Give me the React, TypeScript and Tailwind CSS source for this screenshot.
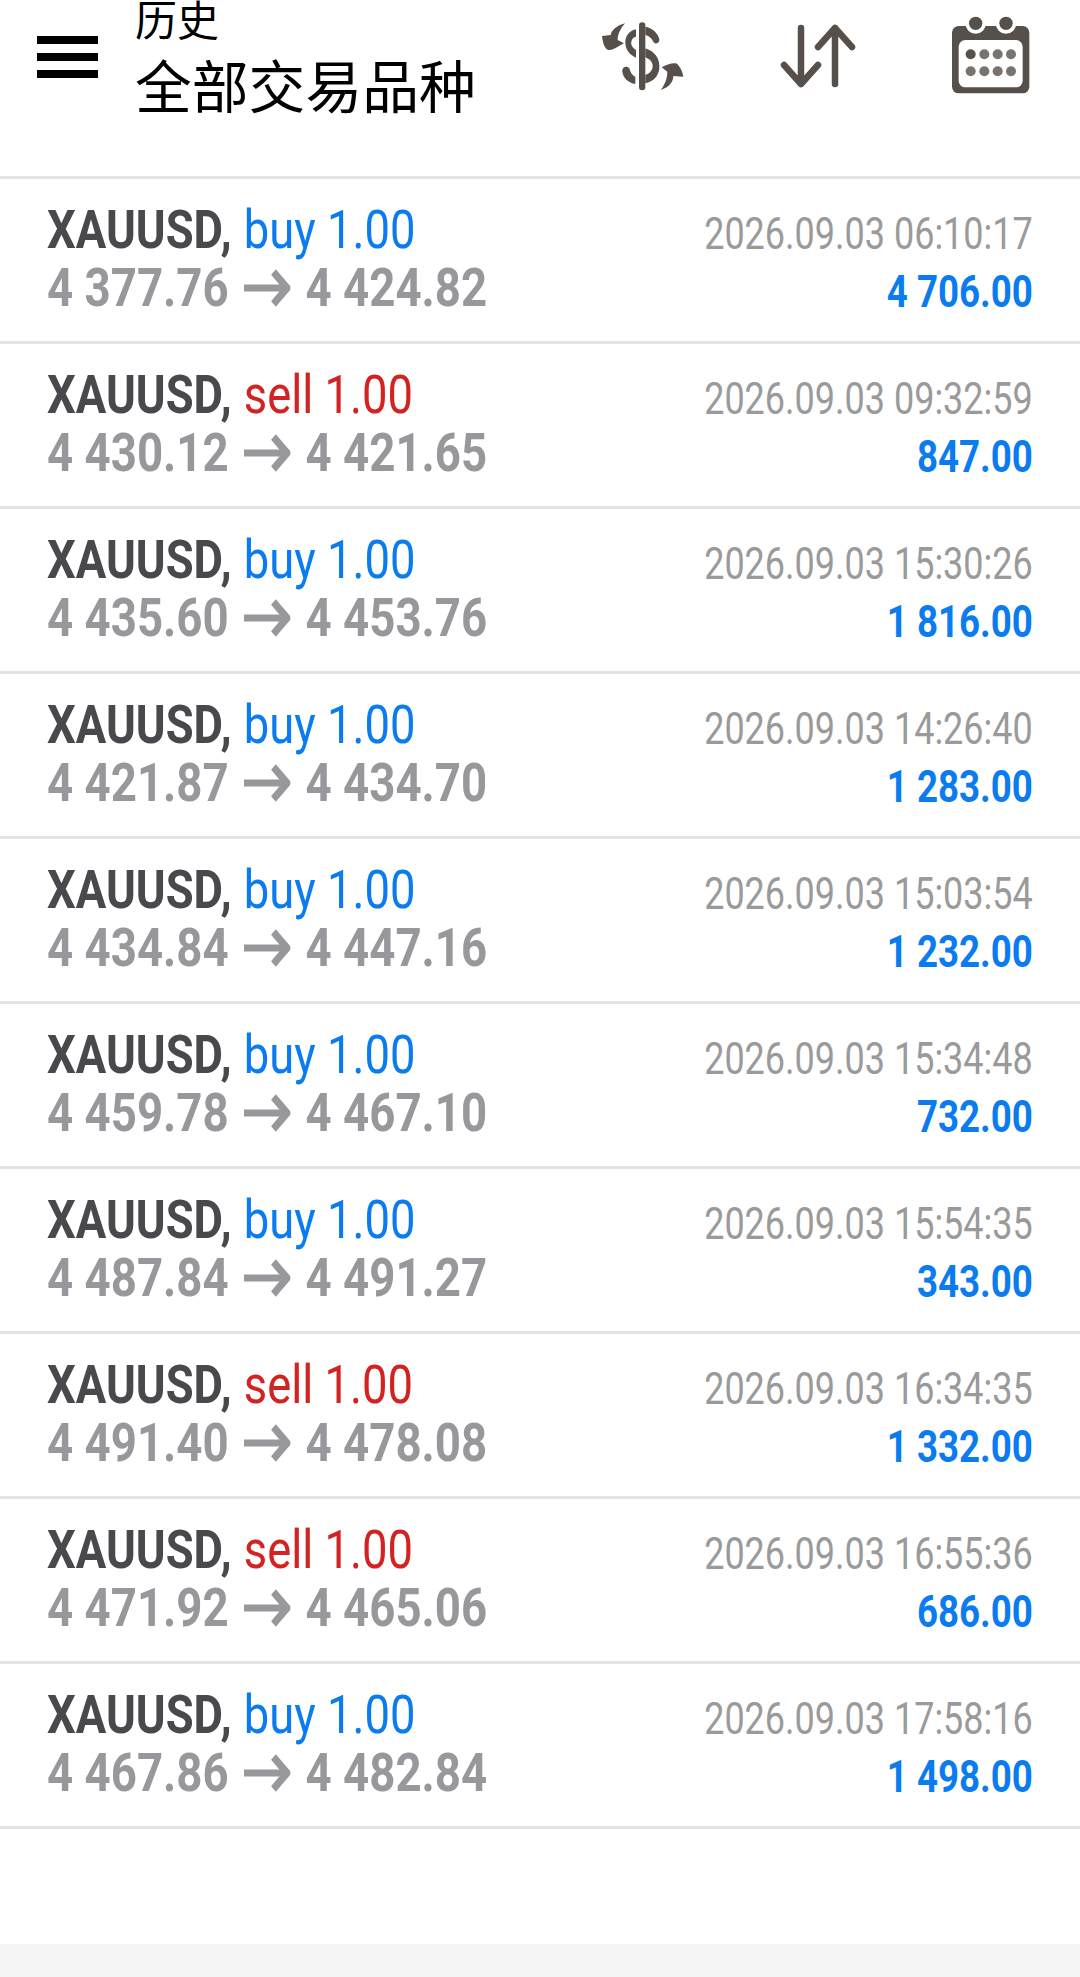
const trades = [
  { side: "buy", from: "4 377.76", to: "4 424.82", time: "2026.09.03 06:10:17", profit: "4 706.00" },
  { side: "sell", from: "4 430.12", to: "4 421.65", time: "2026.09.03 09:32:59", profit: "847.00" },
  { side: "buy", from: "4 435.60", to: "4 453.76", time: "2026.09.03 15:30:26", profit: "1 816.00" },
  { side: "buy", from: "4 421.87", to: "4 434.70", time: "2026.09.03 14:26:40", profit: "1 283.00" },
  { side: "buy", from: "4 434.84", to: "4 447.16", time: "2026.09.03 15:03:54", profit: "1 232.00" },
  { side: "buy", from: "4 459.78", to: "4 467.10", time: "2026.09.03 15:34:48", profit: "732.00" },
  { side: "buy", from: "4 487.84", to: "4 491.27", time: "2026.09.03 15:54:35", profit: "343.00" },
  { side: "sell", from: "4 491.40", to: "4 478.08", time: "2026.09.03 16:34:35", profit: "1 332.00" },
  { side: "sell", from: "4 471.92", to: "4 465.06", time: "2026.09.03 16:55:36", profit: "686.00" },
  { side: "buy", from: "4 467.86", to: "4 482.84", time: "2026.09.03 17:58:16", profit: "1 498.00" },
];

function DollarIcon() {
  return (
    <svg width="110" height="90" viewBox="0 0 330 270" fill="#574f4a">
      <rect x="147" y="37" width="19" height="204" rx="9" />
      <path d="M138 58C115 62 105 82 106 100C107 120 120 135 138 143L138 120C126 112 122 102 124 95C126 85 130 82 138 80Z" />
      <path d="M166 50C185 52 205 70 208 88C210 100 195 105 190 95C185 85 178 78 166 75Z" />
      <path d="M166 115C195 125 210 145 208 175C205 200 190 215 166 220L166 195C180 190 188 180 188 168C188 155 178 147 166 142Z" />
      <path d="M136 222C115 218 100 205 97 185C95 172 110 165 118 175C122 190 128 197 136 200Z" />
      <path d="M105 40C80 47 65 60 62 75L36 78C38 95 42 115 55 120C70 122 90 105 102 100L83 90C83 72 92 55 105 40Z" />
      <path d="M212 240C238 232 250 215 250 198L280 200C278 185 268 165 258 160C245 158 228 165 215 172L232 185C232 205 224 225 212 240Z" />
    </svg>
  );
}

function SortIcon() {
  return (
    <svg width="76" height="64" viewBox="0 0 76 64" fill="none" stroke="#574f4a" strokeWidth="6.5" strokeLinecap="round" strokeLinejoin="round">
      <path d="M21 4v56M4 41l17 19 17-19" />
      <path d="M55 60V4M38 23 55 4l17 19" />
    </svg>
  );
}

function CalendarIcon() {
  const dots = [
    [92, 133], [133, 133], [173, 133], [213, 133],
    [92, 184], [133, 184], [173, 184], [213, 184],
  ];
  return (
    <svg width="100" height="90" viewBox="0 0 300 270">
      <rect x="36" y="48" width="232" height="202" rx="20" fill="#574f4a" />
      <circle cx="107" cy="40" r="31" fill="#fff" />
      <circle cx="198" cy="40" r="31" fill="#fff" />
      <circle cx="107" cy="40" r="20" fill="#574f4a" />
      <circle cx="198" cy="40" r="20" fill="#574f4a" />
      <rect x="56" y="90" width="192" height="142" rx="20" fill="#fff" />
      {dots.map(([cx, cy], i) => (
        <circle key={i} cx={cx} cy={cy} r="15" fill={i === 0 ? "#574f4a" : "#7a726d"} />
      ))}
    </svg>
  );
}

function PriceArrow() {
  return (
    <svg width="55" height="38" viewBox="0 0 55 38" fill="none" stroke="#98989c" className="mx-[18px] shrink-0">
      <path d="M0 19H52" strokeWidth="7" />
      <path d="M35 3 51 19 35 35" strokeWidth="8" />
    </svg>
  );
}

function TradeRow({ trade }: { trade: (typeof trades)[number] }) {
  const isBuy = trade.side === "buy";
  return (
    <div className="flex justify-between h-[165px] border-b-[3px] border-[#e3e3e3] pl-[47px] pr-[47px]">
      <div className="pt-[22px]">
        <div className="origin-left scale-x-[0.84] whitespace-nowrap text-[54px] leading-[58px] text-[#48484d]">
          <span className="font-bold">XAUUSD,</span>{" "}
          <span className={isBuy ? "ml-[1px] text-[#0a7cf0]" : "ml-[1px] text-[#d32222]"}>{trade.side} 1.00</span>
        </div>
        <div className="flex origin-left scale-x-[0.845] items-center whitespace-nowrap text-[54px] leading-[58px] font-bold text-[#98989c]">
          <span>{trade.from}</span>
          <PriceArrow />
          <span>{trade.to}</span>
        </div>
      </div>
      <div className="pt-[26px] text-right">
        <div className="origin-right scale-x-[0.8] whitespace-nowrap text-[45px] leading-[58px] text-[#9a9a9a]">
          {trade.time}
        </div>
        <div className="origin-right scale-x-[0.815] whitespace-nowrap text-[45px] leading-[58px] font-bold text-[#0a7cf0]">
          {trade.profit}
        </div>
      </div>
    </div>
  );
}

export default function App() {
  return (
    <div className="flex h-[1977px] w-[1080px] flex-col bg-white font-['Roboto',sans-serif]">
      <header className="flex h-[179px] shrink-0 items-start overflow-hidden border-b-[3px] border-[#e3e3e3]">
        <div className="ml-[37px] mt-[36px] flex w-[61px] shrink-0 flex-col gap-[9px]">
          <div className="h-[8px] bg-black" />
          <div className="h-[8px] bg-black" />
          <div className="h-[8px] bg-black" />
        </div>
        <div className="ml-[37px] mt-[-7px] font-['Noto_Sans_CJK_SC',sans-serif] text-black">
          <div className="text-[42px] leading-[50px]">历史</div>
          <div className="mt-[4px] text-[56.8px] leading-[72px]">全部交易品种</div>
        </div>
        <div className="ml-auto mr-[40px] mt-[10px] flex items-center">
          <DollarIcon />
          <div className="ml-[80px] mt-[2px]"><SortIcon /></div>
          <div className="ml-[84px]"><CalendarIcon /></div>
        </div>
      </header>
      <div className="flex flex-col">
        {trades.map((trade, i) => (
          <TradeRow key={i} trade={trade} />
        ))}
      </div>
      <div className="mt-auto h-[33px] bg-[#f5f5f5]" />
    </div>
  );
}
